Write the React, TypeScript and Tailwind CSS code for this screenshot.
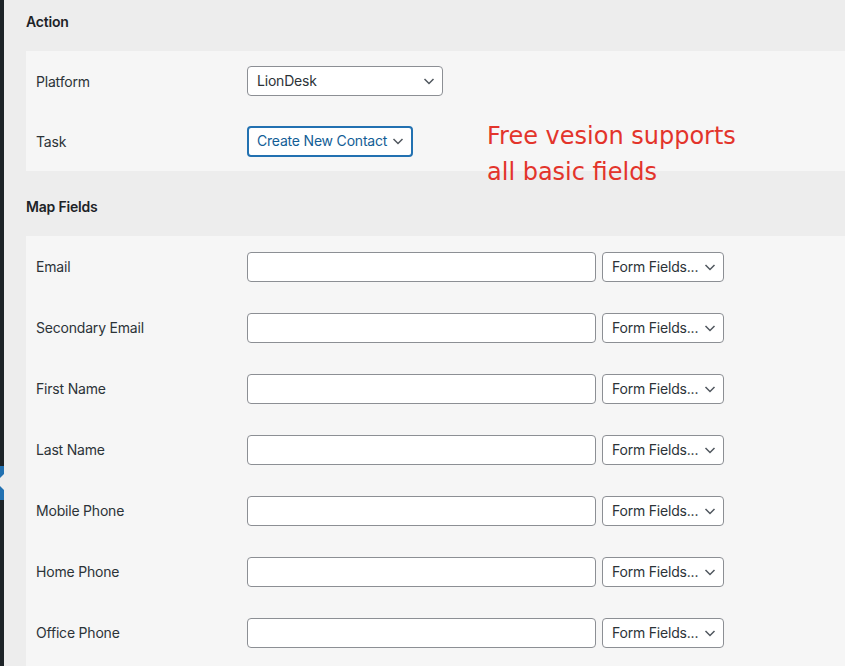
const mapFields = [
  'Email',
  'Secondary Email',
  'First Name',
  'Last Name',
  'Mobile Phone',
  'Home Phone',
  'Office Phone',
]

function Chevron() {
  return (
    <svg width="16" height="16" viewBox="0 0 16 16" className="shrink-0 text-[#50575e]">
      <path d="M3.5 6l4.5 4.5L12.5 6" fill="none" stroke="currentColor" strokeWidth="1.5" />
    </svg>
  )
}

function Select({ value, width, focused }: { value: string; width: string; focused?: boolean }) {
  return (
    <div
      className={
        focused
          ? `${width} h-[31px] flex items-center justify-between pl-[8px] pr-[5px] rounded-[4px] bg-white border-2 border-[#2271b1] text-[#135e96]`
          : `${width} h-[30px] flex items-center justify-between pl-[9px] pr-[5px] rounded-[4px] bg-white border border-[#8c8f94] text-[#2c3338]`
      }
    >
      <span className="text-[14px] leading-none tracking-[-0.2px] whitespace-nowrap">{value}</span>
      <Chevron />
    </div>
  )
}

function Row({ label, height, children }: { label: string; height: string; children: React.ReactNode }) {
  return (
    <div className={`flex items-center ${height}`}>
      <div className="w-[221px] shrink-0 pl-[10px] text-[14px] tracking-[-0.2px] text-[#2c3338]">{label}</div>
      {children}
    </div>
  )
}

export default function App() {
  return (
    <div className="flex h-[666px] overflow-hidden bg-[#ededed] font-['Inter',sans-serif]">
      <div className="relative w-[4px] shrink-0 bg-[#1d2327]">
        <svg width="4" height="34" viewBox="0 0 4 34" className="absolute left-0 top-[466px]">
          <rect x="0" y="0" width="4" height="34" fill="#2271b1" />
          <polygon points="4,8 -4,16 4,24" fill="#ededed" />
        </svg>
      </div>

      <div className="relative flex-1 pl-[22px]">
        <div className="h-[51px] pt-[11px] text-[14px] font-semibold tracking-[-0.2px] text-[#1d2327]">Action</div>
        <div className="bg-[#f6f6f6]">
          <Row label="Platform" height="h-[60px]">
            <Select value="LionDesk" width="w-[196px]" />
          </Row>
          <Row label="Task" height="h-[60px]">
            <Select value="Create New Contact" width="w-[166px]" focused />
          </Row>
        </div>

        <div className="h-[65px] pt-[25px] text-[14px] font-semibold tracking-[-0.2px] text-[#1d2327]">Map Fields</div>
        <div className="bg-[#f6f6f6] pb-[20px]">
          {mapFields.map((f) => (
            <Row key={f} label={f} height="h-[61px]">
              <div className="w-[349px] h-[30px] rounded-[4px] bg-white border border-[#8c8f94]" />
              <div className="ml-[6px]">
                <Select value="Form Fields..." width="w-[122px]" />
              </div>
            </Row>
          ))}
        </div>

        <div className="absolute left-[483px] top-[118px] text-[24px] leading-[36px] text-[#e3342b] font-['DejaVu_Sans',sans-serif]">
          Free vesion supports
          <br />
          all basic fields
        </div>
      </div>
    </div>
  )
}
